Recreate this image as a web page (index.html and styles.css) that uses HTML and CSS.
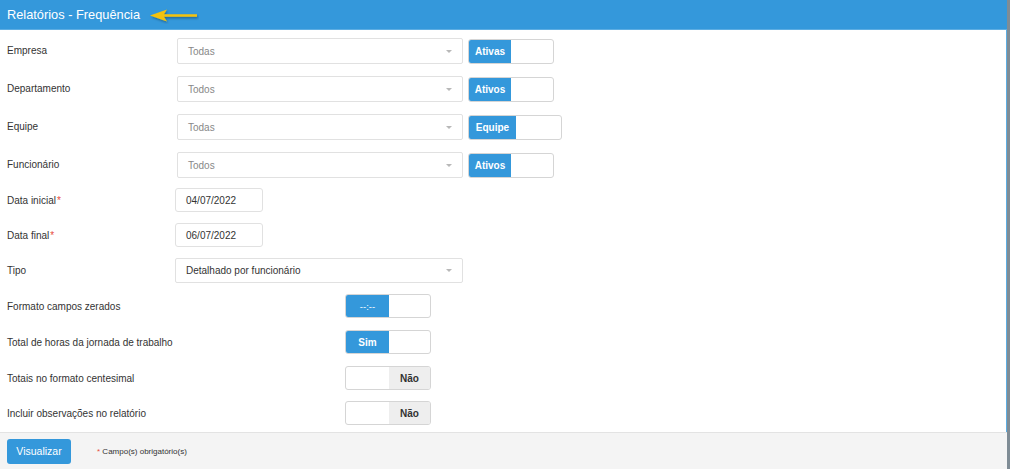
FILE: index.html
```html
<!DOCTYPE html>
<html lang="pt">
<head>
<meta charset="utf-8">
<title>Relatórios - Frequência</title>
<link rel="stylesheet" href="styles.css">
</head>
<body>
<div class="page">
  <header class="header">
    <h1 class="title">Relatórios - Frequência</h1>
    <svg class="arrow" width="50" height="16" viewBox="0 0 50 16">
      <defs>
        <filter id="sh" x="-20%" y="-50%" width="140%" height="200%">
          <feDropShadow dx="1" dy="1.5" stdDeviation="0.8" flood-color="#000" flood-opacity="0.35"/>
        </filter>
      </defs>
      <path d="M1 7.5 L18 1.5 L15 6.2 L48 6.2 L48 8.8 L15 8.8 L18 13.5 Z" fill="#f4c20d" filter="url(#sh)"/>
    </svg>
  </header>

  <main class="form">
    <div class="row r-select">
      <label class="lbl">Empresa</label>
      <div class="select muted"><span>Todas</span><i class="caret"></i></div>
      <div class="toggle t-top"><span class="on">Ativas</span><span class="off"></span></div>
    </div>
    <div class="row r-select">
      <label class="lbl">Departamento</label>
      <div class="select muted"><span>Todos</span><i class="caret"></i></div>
      <div class="toggle t-top"><span class="on">Ativos</span><span class="off"></span></div>
    </div>
    <div class="row r-select">
      <label class="lbl">Equipe</label>
      <div class="select muted"><span>Todas</span><i class="caret"></i></div>
      <div class="toggle t-top wide"><span class="on">Equipe</span><span class="off"></span></div>
    </div>
    <div class="row r-select">
      <label class="lbl">Funcionário</label>
      <div class="select muted"><span>Todos</span><i class="caret"></i></div>
      <div class="toggle t-top"><span class="on">Ativos</span><span class="off"></span></div>
    </div>

    <div class="row r-field">
      <label class="lbl">Data inicial<span class="req">*</span></label>
      <div class="date">04/07/2022</div>
    </div>
    <div class="row r-field">
      <label class="lbl">Data final<span class="req">*</span></label>
      <div class="date">06/07/2022</div>
    </div>
    <div class="row r-field">
      <label class="lbl">Tipo</label>
      <div class="select tipo"><span>Detalhado por funcionário</span><i class="caret"></i></div>
    </div>

    <div class="row r-bool">
      <label class="lbl lbl-wide">Formato campos zerados</label>
      <div class="toggle t-bool"><span class="on thin">--:--</span><span class="off"></span></div>
    </div>
    <div class="row r-bool">
      <label class="lbl lbl-wide">Total de horas da jornada de trabalho</label>
      <div class="toggle t-bool"><span class="on">Sim</span><span class="off"></span></div>
    </div>
    <div class="row r-bool">
      <label class="lbl lbl-wide">Totais no formato centesimal</label>
      <div class="toggle t-bool"><span class="off"></span><span class="no">Não</span></div>
    </div>
    <div class="row r-bool">
      <label class="lbl lbl-wide">Incluir observações no relatório</label>
      <div class="toggle t-bool"><span class="off"></span><span class="no">Não</span></div>
    </div>
  </main>

  <footer class="footer">
    <button class="btn">Visualizar</button>
    <span class="note"><span class="req">*</span> Campo(s) obrigatório(s)</span>
  </footer>
</div>
</body>
</html>
```

FILE: styles.css
```css
* { box-sizing: border-box; }
html, body { margin: 0; padding: 0; background: #fff; }
body {
  font-family: "Liberation Sans", Arial, sans-serif;
  font-size: 10px;
  color: #333;
  width: 1010px;
  height: 471px;
  overflow: hidden;
}
.page {
  width: 1010px;
  height: 469px;
  border-right: 3px solid #7f8c95;
  box-shadow: inset -1px 0 0 #5dade2;
  display: flex;
  flex-direction: column;
}
.header {
  height: 30px;
  background: #3498db;
  border-bottom: 1px solid #5dade2;
  display: flex;
  align-items: center;
  padding-left: 7px;
  flex: none;
}
.title {
  margin: 0;
  font-size: 12.8px;
  font-weight: normal;
  color: #fff;
}
.arrow { margin-left: 9px; margin-top: 2px; }

.form {
  flex: 1;
  min-height: 0;
  padding: 8px 0 0 7px;
  display: flex;
  flex-direction: column;
}
.row { display: flex; align-items: center; flex: none; }
.r-select { height: 26px; margin-bottom: 12px; }
.r-field { height: 24px; margin-bottom: 11px; }
.r-bool { height: 24px; margin-bottom: 12px; }
.r-select:nth-child(4) { margin-bottom: 10px; }
.r-field:nth-child(7) { margin-bottom: 12px; }
.r-bool:nth-child(10) { margin-bottom: 11px; }
.r-bool:last-child { margin-bottom: 0; }

.lbl { width: 168px; flex: none; color: #333; }
.r-select .lbl { width: 170px; position: relative; top: -1px; }
.lbl-wide { width: 338px; }
.req { color: #e74c3c; margin-left: 1px; }

.select {
  width: 286px;
  height: 26px;
  border: 1px solid #e1e1e1;
  border-radius: 2px;
  background: #fff;
  display: flex;
  align-items: center;
  padding: 0 10px;
  justify-content: space-between;
  color: #333;
}
.select.muted { color: #888; }
.select.tipo { width: 288px; height: 25px; }
.caret {
  width: 0; height: 0;
  border-left: 3px solid transparent;
  border-right: 3px solid transparent;
  border-top: 3px solid #b8b8b8;
}

.date {
  width: 88px;
  height: 24px;
  border: 1px solid #e1e1e1;
  border-radius: 3px;
  padding: 0 10px;
  display: flex;
  align-items: center;
  color: #333;
}

.toggle {
  display: flex;
  height: 25px;
  border: 1px solid #d5d5d5;
  border-radius: 3px;
  overflow: hidden;
  background: #fff;
  flex: none;
}
.t-top { width: 86px; margin-left: 5px; }
.t-top.wide { width: 94px; }
.t-bool { width: 86px; height: 24px; }
.toggle .on {
  background: #3498db;
  color: #fff;
  font-weight: bold;
  width: 42px;
  display: flex;
  align-items: center;
  justify-content: center;
}
.t-top.wide .on { width: 47px; }
.t-bool .on { width: 43px; }
.toggle .on.thin { font-weight: normal; font-size: 9.5px; }
.toggle .off { flex: 1; }
.toggle .no {
  width: 41px;
  background: #eeeeee;
  color: #333;
  font-weight: bold;
  display: flex;
  align-items: center;
  justify-content: center;
}

.footer {
  height: 37px;
  flex: none;
  background: #f4f4f4;
  border-top: 1px solid #e3e3e3;
  display: flex;
  align-items: center;
  padding-left: 7px;
}
.btn {
  width: 64px;
  height: 25px;
  border: none;
  border-radius: 3px;
  background: #3498db;
  color: #fff;
  font-family: "Liberation Sans", Arial, sans-serif;
  font-size: 10.5px;
  padding: 0;
}
.note {
  margin-left: 26px;
  font-size: 8px;
  color: #333;
}
.note .req { margin: 0; }
```
